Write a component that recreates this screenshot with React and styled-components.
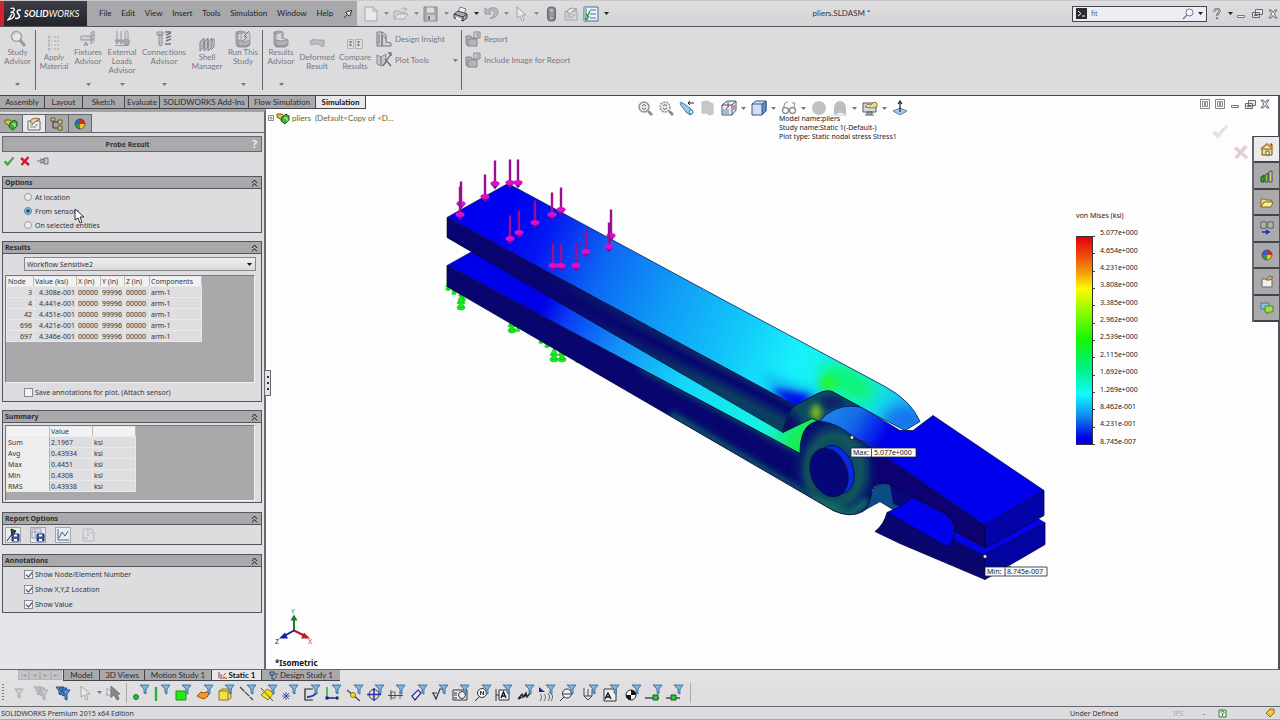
import React, { useState } from 'react'
import styled, { createGlobalStyle, css } from 'styled-components'

const GlobalStyle = createGlobalStyle`
* { box-sizing: border-box; }
body {
margin: 0;
background: #dcdcde;
color: #33343a;
font-family: Lato, "Noto Sans", sans-serif;
font-size: 8px;
line-height: 9px;
}
button, input, select {
font: inherit;
color: inherit;
margin: 0;
padding: 0;
border: 0;
background: none;
}
svg { display: block; flex: none; }
a { color: inherit; text-decoration: none; }
`

const Window = styled.div`
display: flex;
flex-direction: column;
min-height: 100vh;
background: #dcdcde;
`

/* ---------- title bar ---------- */

const TitleBar = styled.header`
display: flex;
align-items: stretch;
height: 27px;
border-top: 1px solid #c9c9cb;
border-bottom: 1px solid #55565c;
background: linear-gradient(#dedee0, #d4d4d7);
`
const Brand = styled.div`
display: flex;
align-items: center;
gap: 2px;
width: 87px;
padding-left: 3px;
border-left: 4px solid #d2232e;
background: linear-gradient(#3c3d46, #23242c);
color: #fff;
font-size: 9px;
font-style: italic;
`
const MenuBar = styled.nav`
display: flex;
align-items: center;
justify-content: space-between;
width: 270px;
padding: 0 4px 0 12px;
background: #a8a8aa;
`
const MenuItem = styled.a`
color: #22232a;
`
const QuickBar = styled.div`
display: flex;
align-items: center;
padding-left: 4px;
`
const IconButton = styled.button`
display: flex;
align-items: center;
justify-content: center;
width: ${p => p.$w || 20}px;
height: 20px;
`
const DocTitle = styled.div`
flex: 1;
align-self: center;
text-align: center;
`
const SearchBox = styled.label`
display: flex;
align-items: center;
align-self: center;
gap: 4px;
width: 135px;
height: 16px;
padding: 0 3px;
border: 1px solid #44454c;
background: #ededf4;
`
const SearchInput = styled.input`
flex: 1;
min-width: 0;
outline: none;
font-size: 7px;
color: #666;
`
const WindowButtons = styled.div`
display: flex;
align-items: center;
`

/* ---------- ribbon ---------- */

const Ribbon = styled.div`
display: flex;
height: 69px;
padding-top: 3px;
border-bottom: 1px solid #44454c;
background: #dcdcde;
`
const RibbonGroup = styled.div`
display: flex;
height: 60px;
padding: 0 1px;
border-right: ${p => (p.$last ? '0' : '1px solid #66676d')};
`
const RibbonButton = styled.button`
display: flex;
flex-direction: column;
align-items: center;
width: ${p => p.$w}px;
height: 60px;
padding-top: ${p => (p.$low ? 5 : 0)}px;
color: #77787e;
text-align: center;
`
const RibbonIcon = styled.span`
display: flex;
align-items: center;
height: 18px;
`
const RibbonDrop = styled.span`
margin-top: auto;
padding-bottom: 4px;
`
const RibbonStack = styled.div`
display: flex;
flex-direction: column;
gap: 3px;
width: ${p => p.$w}px;
padding: 0 2px;
`
const RibbonRow = styled.button`
display: flex;
align-items: center;
gap: 3px;
height: 18px;
color: #77787e;
& > :last-child:not(span) { margin-left: auto; }
`

/* ---------- work area ---------- */

const WorkArea = styled.main`
display: flex;
flex: 1;
min-height: 572px;
`
const SideColumn = styled.div`
position: relative;
display: flex;
flex-direction: column;
flex: none;
width: 266px;
`
const TabStrip = styled.div`
position: relative;
z-index: 2;
display: flex;
width: max-content;
height: 13px;
`
const Tab = styled.button`
width: ${p => p.$w}px;
height: 13px;
border-right: 1px solid #44454c;
border-bottom: 1px solid #44454c;
background: #a9a9ab;
color: #2b2c33;
white-space: nowrap;
${p => p.$active && css`
background: #e8e8ea;
font-weight: 700;
color: #111;
`}
`
const Panel = styled.aside`
display: flex;
flex-direction: column;
flex: 1;
padding: 0 2px;
border-top: 3px solid #a3a3a6;
border-right: 2px solid #6a6b71;
background: linear-gradient(#dcdcdf, #e5e5ea);
font-family: "Noto Sans", sans-serif;
font-size: 7px;
`
const PanelTabs = styled.div`
display: flex;
margin: 2px -2px 3px;
border-bottom: 1px solid #66676d;
`
const PanelTab = styled.button`
display: flex;
align-items: center;
justify-content: center;
width: 23px;
height: 18px;
border: 1px solid #66676d;
border-left: 0;
border-bottom: 0;
background: ${p => (p.$active ? '#e8e8ea' : '#a9a9ab')};
`
const PanelTitle = styled.div`
display: flex;
align-items: center;
height: 16px;
padding-right: 4px;
border: 1px solid #66676d;
background: #aaaaac;
font-weight: 700;
h2 {
flex: 1;
margin: 0;
font-size: 7px;
text-align: center;
}
span { color: #eee; font-size: 10px; }
`
const PanelActions = styled.div`
display: flex;
align-items: center;
height: 18px;
margin-bottom: 6px;
`
const Section = styled.section`
margin-bottom: ${p => (p.$tight ? 8 : 9)}px;
border: 1px solid #55565c;
background: #dddddf;
`
const SectionHead = styled.button`
display: flex;
align-items: center;
justify-content: space-between;
width: 100%;
height: 12px;
padding: 0 3px 0 2px;
border-bottom: 1px solid #55565c;
background: #a9a9ab;
font-weight: 700;
color: #2b2c33;
`
const SectionBody = styled.div`
padding: ${p => p.$pad || '0'};
`
const Choice = styled.label`
display: flex;
align-items: center;
gap: 2px;
height: ${p => p.$h || 14}px;
padding-left: 21px;
`
const Radio = styled.input`
appearance: none;
width: 8px;
height: 8px;
margin-right: 1px;
border: 1px solid #9a9aa0;
border-radius: 50%;
background: #ececee;
&:checked {
border-color: #4a7fa8;
background: radial-gradient(circle, #14507c 0 1px, #c2ddee 3px);
}
`
const Tick = styled.input`
appearance: none;
width: 9px;
height: 9px;
border: 1px solid #8a8b90;
background: #f2f2f4;
&:checked::after {
content: "";
display: block;
width: 3px;
height: 5px;
margin-left: 2px;
border: solid #2c3c66;
border-width: 0 1px 1px 0;
transform: rotate(40deg);
}
`
const SelectWrap = styled.div`
display: flex;
align-items: center;
height: 14px;
margin: 0 3px 4px 21px;
padding-right: 3px;
border: 1px solid #85868b;
background: linear-gradient(#f0f0f1, #d9d9dc);
`
const Select = styled.select`
appearance: none;
flex: 1;
padding-left: 2px;
outline: none;
`
const Well = styled.div`
height: ${p => p.$h}px;
margin: 0 4px 0 2px;
border: 1px solid #77787d;
border-right-color: #f4f4f4;
border-bottom-color: #f4f4f4;
background: #a9a9ab;
`
const Grid = styled.table`
border-collapse: collapse;
table-layout: fixed;
width: ${p => p.$w}px;
background: #dedee0;
line-height: 9px;
th, td {
height: 11px;
padding: 0 1px;
border: 1px solid #e9e9eb;
font-weight: 400;
text-align: left;
white-space: nowrap;
overflow: hidden;
}
thead th {
height: 10px;
border-right-color: #bbb;
background: #f2f2f3;
}
tbody th {
border-right-color: #aaa;
background: #eeeeef;
}
td.num { text-align: right; }
`
const ReportRow = styled.div`
display: flex;
align-items: center;
gap: 9px;
height: 19px;
padding-left: 2px;
`
const ReportButton = styled.button`
display: flex;
align-items: center;
justify-content: center;
width: 16px;
height: 16px;
border: 1px solid ${p => (p.disabled ? 'transparent' : '#a2a6ae')};
background: ${p => (p.disabled ? 'transparent' : '#e9ebf0')};
`

/* ---------- graphics area ---------- */

const Viewport = styled.section`
position: relative;
flex: 1;
min-width: 700px;
border-right: 2px solid #4d515e;
background: #fdfdfe;
`
const Scene = styled.svg`
position: absolute;
inset: 0;
width: 100%;
height: 100%;
font-family: "Noto Sans", sans-serif;
font-size: 7px;
`
const PanelHandle = styled.button`
position: absolute;
left: -1px;
top: 274px;
display: flex;
flex-direction: column;
align-items: center;
justify-content: center;
gap: 4px;
width: 6px;
height: 26px;
border: 1px solid #66676d;
border-left: 0;
background: #e4e4e8;
i {
width: 2px;
height: 2px;
background: #333;
}
`
const HeadsUp = styled.div`
position: absolute;
top: 2px;
left: 0;
right: 0;
display: flex;
justify-content: center;
`
const FeatureTree = styled.div`
position: absolute;
top: 15px;
left: 2px;
display: flex;
align-items: center;
gap: 2px;
color: #66682c;
white-space: pre;
`
const ModelInfo = styled.div`
position: absolute;
left: 513px;
top: 18px;
font-family: "Noto Sans", sans-serif;
font-size: 7px;
color: #222;
p { margin: 0; }
`
const DocButtons = styled.div`
position: absolute;
top: 3px;
right: 6px;
display: flex;
gap: 3px;
`
const Confirm = styled.button`
position: absolute;
right: ${p => p.$right}px;
top: ${p => p.$top}px;
`
const Legend = styled.div`
position: absolute;
right: 136px;
top: 115px;
width: 66px;
font-family: "Noto Sans", sans-serif;
font-size: 7px;
color: #222;
`
const LegendScale = styled.div`
display: flex;
margin-top: 4px;
ol {
display: grid;
grid-template-rows: repeat(13, 1fr);
align-items: center;
height: 226px;
margin: 0;
padding: 0 0 0 5px;
list-style: none;
}
`
const LegendBar = styled.div`
width: 17px;
height: 209px;
margin-top: 12px;
border: 1px solid #333;
border-width: 1px 1px 1px 0;
background: linear-gradient(#e00010, #f04a08 9%, #f59a08 17%, #fffb00 25%, #8dfb00 36%, #14f50a 50%, #00f078 62%, #10fbfb 76%, #1090f0 86%, #0000e8 97%);
`
const Ticks = styled.div`
width: 2px;
height: 209px;
margin-top: 12px;
border-bottom: 1px solid #444;
background: repeating-linear-gradient(#444 0 1px, transparent 1px calc(100% / 12));
`
const TaskPane = styled.div`
position: absolute;
top: 40px;
right: -1px;
display: grid;
grid-template-rows: repeat(7, 1fr);
width: 27px;
height: 186px;
border-top: 1px solid #44454c;
border-left: 2px solid #66676d;
`
const TaskTab = styled.button`
display: flex;
align-items: center;
justify-content: center;
border-bottom: 2px solid #44454c;
background: ${p => (p.$active ? '#ebebed' : '#aaaaac')};
`
const ViewName = styled.div`
position: absolute;
left: 9px;
bottom: 2px;
font-family: "Noto Sans", sans-serif;
font-size: 8px;
font-weight: 700;
color: #111;
`

/* ---------- bottom ---------- */

const SheetTabs = styled.div`
display: flex;
height: 12px;
padding-left: 18px;
border-top: 1px solid #66676d;
background: #e3e3e6;
`
const SheetNav = styled.div`
display: flex;
width: 45px;
button {
width: 11px;
height: 10px;
border: 1px solid #b4b4b8;
background: #c5c5c8;
color: #999;
font-size: 6px;
line-height: 6px;
}
`
const SheetTab = styled(Tab)`
display: flex;
align-items: center;
justify-content: center;
gap: 2px;
height: 11px;
border-left: 1px solid #44454c;
border-right: 0;
`
const FilterBar = styled.div`
display: flex;
align-items: center;
height: 26px;
padding-bottom: 2px;
border-bottom: 1px solid #66676d;
background: #dfdfe1;
`
const Grip = styled.span`
width: 2px;
height: 18px;
margin: 0 4px 0 2px;
background: repeating-linear-gradient(#777 0 1px, transparent 1px 3px);
`
const Divider = styled.span`
width: 1px;
height: 20px;
background: #aaa;
`
const FilterGrid = styled.div`
display: grid;
grid-template-columns: repeat(26, 1fr);
width: 556px;
margin: 0 4px 0 3px;
button {
display: flex;
justify-content: center;
}
`
const StatusBar = styled.footer`
display: flex;
align-items: center;
height: 13px;
padding: 0 5px 0 1px;
border-bottom: 1px solid #aaa;
background: #dcdcde;
font-family: "Noto Sans", sans-serif;
font-size: 7px;
`
const StatusCell = styled.span`
width: ${p => p.$w}px;
color: ${p => (p.$dim ? '#aaa' : 'inherit')};
`
const Spacer = styled.span`
flex: 1;
`

/* ---------- icons ---------- */

const Svg = ({ s = 16, w, h, children }) => (
    <svg width={w || s} height={h || s} viewBox={`0 0 ${w || s} ${h || s}`} fill="none" aria-hidden="true">
        {children}
    </svg>
)

const Caret = ({ color = '#77787e' }) => (
    <Svg w={5} h={3}><path d="M0 0h5L2.5 3z" fill={color} /></Svg>
)

const Chevrons = () => (
    <Svg w={7} h={8}><path d="M1 4l2.500-3L6 4M1 7.500l2.500-3 2.500 3" stroke="#222" /></Svg>
)

const DsLogo = () => (
    <Svg w={15} h={14}>
        <path d="M3.500 1.500C6 .5 8 1.500 7 3.500 6.300 5 5 5.300 3.500 5.500c3-.3 4.500 1 3.500 3.500-.8 2-3 3-6 4 1.500-2 3-4.500 4-6" stroke="#fff" strokeWidth="1.300" />
        <path d="M14 3.200c-2.500-.8-4.500.6-3.500 2.600.8 1.600 2.400 2.200 2 3.900-.3 1.500-2 1.900-4.500 1.600" stroke="#fff" strokeWidth="1.500" />
    </Svg>
)

const Pin = () => (
    <Svg s={10}><path d="M1 9l3-3" stroke="#333" /><path d="M3 4l3 3c2 0 2-2 1.500-3L9 2 8 1 6 2.500C5 2 3 2 3 4z" stroke="#333" fill="#ddd" /></Svg>
)

const PageIcon = () => (
    <Svg><path d="M2 1h8l4 4v10H2z" fill="#eaeaec" stroke="#a5a5aa" /><path d="M10 1v4h4" stroke="#a5a5aa" /></Svg>
)
const OpenIcon = () => (
    <Svg><path d="M1 13V5h5l1 1h5v2H5z" fill="#d3d3d6" stroke="#aaaab0" /><path d="M1 13l4-5h10l-4 5z" fill="#e5e5e8" stroke="#aaaab0" /><path d="M8 3c2-2 4-1 5 1l1-2M13 4l-2-1" stroke="#aaaab0" /></Svg>
)
const SaveIcon = () => (
    <Svg><path d="M1 1h13v14H1z" fill="#a8a8ad" stroke="#88888d" /><path d="M4 1.500h7v5H4z" fill="#dededf" /><path d="M4 9h8v5.500H4z" fill="#c9c9cc" /><path d="M5 10h2v4H5z" fill="#77777c" /></Svg>
)
const PrintIcon = () => (
    <Svg><path d="M5 6l2-5 6 2-2 5z" fill="#f4f4f8" stroke="#77787e" /><path d="M1 8l4-3 9 3v4l-4 3-9-3z" fill="#aab" stroke="#44454c" /><path d="M1 8l9 3 4-3M10 11v4" stroke="#33343a" /><path d="M3 11l5 2v2l-5-2z" fill="#fff" /></Svg>
)
const UndoIcon = () => (
    <Svg><path d="M2 2v6h6L6 6c3-3 7-1 5 3-.6 1.400-2 2.500-4 3.500 5-.5 8-3 8-6.500C15 1.500 9 0 4.500 4z" fill="#bdbdc1" stroke="#94949a" /></Svg>
)
const CursorIcon = ({ fill = '#e8e8ea', stroke = '#a5a5aa' }) => (
    <Svg><path d="M4 1v11l3-2 2 5 2-1-2-5h4z" fill={fill} stroke={stroke} /></Svg>
)
const SelectOtherIcon = () => (
    <Svg><path d="M1 3v8l2-2 2 4 1-1-1-3h2z" fill="#e8e8ea" stroke="#a5a5aa" /><path d="M5 1v11l3-2 3 5 2-1-2-5h3z" fill="#85858a" stroke="#77777c" /></Svg>
)
const TrafficIcon = () => (
    <Svg><rect x="4.500" y="1" width="8" height="14" rx="3" fill="#85868b" stroke="#66676c" /><circle cx="8.500" cy="4.500" r="2" fill="#b5b5b8" /><circle cx="8.500" cy="8.500" r="2" fill="#9b9b9f" /><circle cx="8.500" cy="12" r="1.500" fill="#b5b5b8" /></Svg>
)
const HandListIcon = ({ soft = true }) => (
    <Svg><path d="M2 5h12v9H2z" fill={soft ? '#d5d5d8' : '#eee'} stroke={soft ? '#a5a5aa' : '#66676c'} /><path d="M4 6l2-3 4-1 4 1-4 2-3 3z" fill={soft ? '#e5e5e8' : '#e9cf9c'} stroke={soft ? '#99999e' : '#8a6a3a'} /><path d="M4 9h3M4 11h6M9 9h3" stroke={soft ? '#a5a5aa' : '#88898e'} /></Svg>
)
const OptionsIcon = () => (
    <Svg><path d="M1 1h14v14H1z" fill="#eef1f7" stroke="#4f6a8c" /><path d="M1 1h3v14H1z" fill="#9db7d3" /><path d="M7 4h6M7 8h6M7 12h6" stroke="#9fb0cb" strokeWidth="2" /><path d="M3 8l1.500 2L7 5M2 12l1.500 2L6 10" stroke="#259a3a" strokeWidth="1.300" /></Svg>
)

const HelpIcon = () => (
    <Svg w={10} h={12}><path d="M2.500 4c-.5-4 5.500-4 5-.5C7.300 5.500 5 5.500 5 8M5 9.500V11" stroke="#66676d" strokeWidth="2.200" /><path d="M2.500 4c-.5-4 5.500-4 5-.5C7.300 5.500 5 5.500 5 8" stroke="#e6e6e8" strokeWidth=".8" /></Svg>
)
const MinIcon = () => <Svg s={10}><path d="M1.500 6.500h7v2h-7z" stroke="#77787e" fill="#f4f4f6" /></Svg>
const RestoreIcon = () => (
    <Svg s={11}><path d="M3.500 1.500h7v5h-7zM.5 4.500h7v5h-7z" stroke="#66676d" fill="#e9e9ec" /><path d="M2.500 6.500h3v1h-3z" stroke="#66676d" /></Svg>
)
const CloseIcon = () => (
    <Svg s={10}><path d="M1 1h2l2 2.500L7 1h2L6.200 5 9 9H7L5 6.500 3 9H1l2.800-4z" stroke="#66676d" fill="#f2f2f4" /></Svg>
)
const TileIcon = () => (
    <Svg s={10}><path d="M.5.5h9v9h-9z" stroke="#88898e" /><path d="M2.500 2.500h2v5h-2zM5.500 2.500h2v5h-2z" stroke="#88898e" /></Svg>
)

const StudyIcon = () => (
    <Svg s={18}><circle cx="7.500" cy="6.500" r="5" fill="#e8e8ea" stroke="#a0a0a5" strokeWidth="1.600" /><path d="M11 10l5 6" stroke="#9a9a9f" strokeWidth="3" /><path d="M5 6c0-2 2-3 3.500-2.500" stroke="#bbb" /></Svg>
)
const MaterialIcon = () => (
    <Svg s={18}><path d="M4 1v16M3 2h4M3 6h4M3 10h4M3 14h4M9 2h6M9 6h6M9 10h6M9 14h6" stroke="#a5a5aa" strokeDasharray="2 1" /></Svg>
)
const FixtureIcon = () => (
    <Svg s={18}><path d="M2 6h10v4H2zM12 3v11l3-3V1z" fill="#d0d0d3" stroke="#99999e" /><path d="M7 12l-2 3h4z" stroke="#88888d" /><path d="M12 7l3-3M12 11l3-3" stroke="#88888d" /></Svg>
)
const LoadsIcon = () => (
    <Svg s={18}><path d="M4 1v12M8 1v12M2 10l2 4 2-4zM6 10l2 4 2-4zM2 15.500h14" stroke="#99999e" fill="#bbb" /><rect x="12" y="1" width="3" height="10" rx="1.500" fill="#d5d5d8" stroke="#a5a5aa" /><circle cx="13.500" cy="12" r="3" fill="#aaaaae" stroke="#99999e" /></Svg>
)
const ConnectIcon = () => (
    <Svg s={18}><path d="M2 2h6v3H2zM4 5h3v10l-1.500 1L4 15z" fill="#c5c5c8" stroke="#8f8f94" /><path d="M10 2h6M11 5l5-2M11 8l5-2M11 11l5-2M10 14h6" stroke="#77777c" strokeWidth="1.500" /></Svg>
)
const ShellIcon = () => (
    <Svg s={18}><path d="M2 7l4-4v9l-4 4zM6 7l4-4v9l-4 4zM10 7l4-4v9l-4 4z" fill="#bcbcc0" stroke="#808085" /><path d="M14 6l2-2v8l-3 3" stroke="#808085" /></Svg>
)
const PartShape = ({ children }) => (
    <Svg s={18}>
        <path d="M2 2l5-1 4 1v6l5 2v5l-3 2H4l-2-3z" fill="#b2b2b6" stroke="#95959a" />
        <path d="M4 4l6-2v6l6 2-6 1-6-1z" fill="#d5d5d8" stroke="#95959a" />
        <path d="M4 10v6h8l4-2M4 4L2 2" stroke="#85858a" />
        {children}
    </Svg>
)
const RunIcon = () => (
    <PartShape><path d="M7 3h9v7l-6 2-3-2z" fill="#d0d0d3" stroke="#a0a0a5" /><path d="M15 1l-5 5 3 1-5 5" stroke="#77777c" /></PartShape>
)
const DeformedIcon = () => (
    <Svg s={18}><path d="M2 6c3-3 9 0 14-1v6c-2 1-3 0-4-1-3-2-7-1-9 0z" fill="#bdbdc1" stroke="#a0a0a5" /></Svg>
)
const CompareIcon = () => (
    <Svg s={18}><path d="M1.500 4.500h6v9h-6zM9.500 4.500h7v9h-7z" stroke="#b2b2b6" /><path d="M4.500 6v6M12.500 6v6" stroke="#77777c" strokeWidth="2" strokeDasharray="2 1" /></Svg>
)
const InsightIcon = () => (
    <Svg><path d="M1 1h5v14H1zM6 4l4 3v4l5 1v3H6z" fill="#d0d0d3" stroke="#77777c" /><path d="M6 1l4 3v4M3 3v10" stroke="#77777c" /></Svg>
)
const PlotIcon = () => (
    <Svg><path d="M1 3l4 2v9l-4-2zM5 5l5-3v9l-5 3z" fill="#c9c9cc" stroke="#88888d" /><path d="M7 14l8-12M9 7l6 7M12 1h3v3" stroke="#6d6d72" strokeWidth="1.300" /></Svg>
)
const ReportIcon = () => (
    <Svg><path d="M1 5h5l1 2h5v8H3l-2-2z" fill="#b5b5b9" stroke="#85858a" /><path d="M3 8h8M3 8v7" stroke="#85858a" /><path d="M9 1h6v6H9z" fill="#dcdcde" stroke="#85858a" /><path d="M11 3h3M11 5h3" stroke="#85858a" /></Svg>
)

const FmIcon = () => (
    <Svg s={14}><path d="M1 3h5l2 2v4L4 8 1 6z" fill="#e0c43c" stroke="#6e5a10" /><path d="M6 6l4-3 3 2v4l-4 4-4-3z" fill="#3fb13a" stroke="#14601c" /><path d="M8 7h3v3" stroke="#e6f6b0" /></Svg>
)
const ConfigIcon = () => (
    <Svg s={14}><path d="M3 2v9h5M3 5h5" stroke="#333" /><path d="M1 1h4v3H1z" fill="#e6cb3b" stroke="#655" /><path d="M8 3h4v4H8zM8 9h4v4H8z" fill="#d8c85c" stroke="#655" /></Svg>
)
const BallIcon = () => (
    <Svg s={14}><path d="M7 7V2a5 5 0 0 1 5 5z" fill="#d52b2b" /><path d="M7 7H2a5 5 0 0 1 5-5z" fill="#2f63c9" /><path d="M7 7h5a5 5 0 0 1-5 5z" fill="#f0c22a" /><path d="M7 7v5a5 5 0 0 1-5-5z" fill="#2f9a3c" /><circle cx="7" cy="7" r="5" stroke="#333" strokeWidth=".6" /></Svg>
)
const CheckIcon = ({ color = '#3da83b', s = 12 }) => (
    <svg width={s} height={s} viewBox="0 0 12 12"><path d="M1 7l2-1 1.500 2L10 2l1 1-6.500 8z" fill={color} stroke={color} strokeWidth=".6" /></svg>
)
const CrossIcon = ({ color = '#cf1f2e', s = 12 }) => (
    <svg width={s} height={s} viewBox="0 0 12 12"><path d="M2 3l8 7M9.500 2L2.500 10" stroke={color} strokeWidth="2.400" /></svg>
)
const PushPin = () => (
    <Svg w={14} h={10}><path d="M1 5h4M5 2v6M5 3.500h3v3H5M8 2h4v6H8z" stroke="#77777c" fill="#c5c5c8" /></Svg>
)

const FloppyOver = ({ children }) => (
    <Svg s={14}>{children}<path d="M6 6h7v7H6z" fill="#3b5799" stroke="#1f3468" /><path d="M8 6.500h3v2H8zM8 11h3v2H8z" fill="#fff" /></Svg>
)

const Zoom = ({ dashed }) => (
    <Svg><circle cx="7" cy="7" r="5" fill="#e6e8ea" stroke="#909398" strokeWidth="1.400" strokeDasharray={dashed ? '2 1' : null} /><path d="M5 6l2-1.500L9 6M5 8l2 1.500L9 8" stroke="#667" /><path d="M11 11l4 4" stroke="#88898f" strokeWidth="2.500" /></Svg>
)
const PrevView = () => (
    <Svg><path d="M2 2l9 6 3 5-3 2-4-3-6-8z" fill="#9ecbe8" stroke="#3e7aa5" /><path d="M15 3H9l2-2M9 3l2 2" stroke="#222" /><circle cx="12" cy="12" r="2" fill="#e1f1fa" stroke="#3e7aa5" /></Svg>
)
const SectionView = () => (
    <Svg><path d="M2 2l5-1 6 3v10l-4 1-2-2-5 0z" fill="#c5c7c9" stroke="#bcbec1" /></Svg>
)
const OrientView = () => (
    <Svg><path d="M1 5l5-4h9v9l-4 5H1z" fill="#e4eef8" stroke="#445a70" /><path d="M1 5h10v10M11 5l4-4" stroke="#445a70" /><path d="M7 2v5M13 5v5M5 9l3-3" stroke="#b8324a" /><path d="M2 9h6v5H2z" fill="#94bfe2" /></Svg>
)
const CubeView = () => (
    <Svg><path d="M1 4l4-3h10v10l-4 4H1z" fill="#cfe0f6" stroke="#3d567c" /><path d="M11 4v11l4-4V1z" fill="#5e8ed0" stroke="#3d567c" /><path d="M1 4h10" stroke="#3d567c" /></Svg>
)
const GlassesView = () => (
    <Svg><circle cx="4.500" cy="10.500" r="3" stroke="#8d9196" strokeWidth="1.400" /><circle cx="11.500" cy="10.500" r="3" stroke="#8d9196" strokeWidth="1.400" /><path d="M2 9l2-6 3-1M13 8l1-5-3 0" stroke="#8d9196" /></Svg>
)
const SphereView = () => <Svg><circle cx="8" cy="8" r="7" fill="#bfc1c3" /></Svg>
const SceneView = () => <Svg><path d="M2 15V8a6 7 0 0 1 12 0v7l-4-2H7z" fill="#bcbec0" /><path d="M1 15h14" stroke="#ccc" /></Svg>
const MonitorView = () => (
    <Svg><path d="M1 3h13v9H1z" fill="#d5d9de" stroke="#55585e" /><path d="M3 7l3-3 3 1 3-3 3 1v4l-5 1z" fill="#eedc94" stroke="#7a6a2c" strokeWidth=".8" /><path d="M5 12h5v2H5zM3 15h9" stroke="#55585e" /></Svg>
)
const NormalTo = () => (
    <Svg><path d="M8 8l7 3-7 4-7-4z" fill="#a9c9e8" stroke="#5b83ac" /><path d="M8 12V1M6 4l2-3 2 3" stroke="#2b3038" strokeWidth="1.300" /></Svg>
)

const TASKS = [
    <Svg key="h" s={14}><path d="M2 7h10v6H2z" fill="#f2e08a" stroke="#6d5a1a" /><path d="M1 7l6-5 6 5" stroke="#b8902a" strokeWidth="2" /><path d="M6 9h3v4H6z" fill="#fff" stroke="#6d5a1a" /><path d="M10 2h2v3" fill="#b33" stroke="#b33" /></Svg>,
    <Svg key="l" s={14}><path d="M1 8l3-2v7H1z" fill="#3ba33d" stroke="#185d1e" /><path d="M5 6l3-2v9H5z" fill="#7fcf3c" stroke="#185d1e" /><path d="M9 3l3-1v11H9z" fill="#e9d65a" stroke="#2b4a8d" /></Svg>,
    <Svg key="f" s={14}><path d="M1 12V4h4l1 1h5v2" fill="#f0dc84" stroke="#80691d" /><path d="M1 12L4 7h9l-2 5z" fill="#f9eda8" stroke="#80691d" /></Svg>,
    <Svg key="v" s={14}><path d="M1 1h5v6H1zM8 1h5v6H8z" fill="#efeff1" stroke="#44454c" /><path d="M2 3h3M2 5h3M9 3h3M9 5h3" stroke="#5a8a3a" /><path d="M2 11h6M6 9l3 2-3 2" stroke="#1c2fb0" strokeWidth="1.500" /></Svg>,
    <BallIcon key="b" />,
    <Svg key="p" s={14}><path d="M2 5h10v8H2z" fill="#efefef" stroke="#66676d" /><path d="M6 6l3-4 4 1-3 3z" fill="#d9b678" stroke="#7b5f33" /></Svg>,
    <Svg key="c" s={14}><path d="M1 2h8v6H1z" fill="#8fc3ea" stroke="#3c78ac" /><path d="M5 5h8v6H9l-2 2v-2H5z" fill="#9be04a" stroke="#4c8c1e" /></Svg>,
]

/* small glyphs that sit under the selection-filter funnel */
const FILTERS = [
    <circle cx="4" cy="13" r="2.500" fill="#28c038" stroke="#127a20" />,
    <path d="M3 3v14" stroke="#2fae3c" strokeWidth="2.400" />,
    <path d="M2 7h10v9H2z" fill="#28e818" stroke="#159418" />,
    <path d="M1 12l4-4 3 1 5-2-1 5-4 3-3-1z" fill="#f09a2a" stroke="#9c4c10" />,
    <path d="M2 7l3-2h9v9l-3 2H2zM2 7h9v9" fill="#f5df4c" stroke="#8f7a14" />,
    <path d="M1 3l13 13" stroke="#2a4a3a" strokeDasharray="6 1" strokeWidth="1.200" />,
    <><path d="M1 11l6-6 7 4-6 7z" fill="#f2e02c" stroke="#8f7a14" /><path d="M1 4l12 13" stroke="#55561c" /></>,
    <path d="M5 8v8M1 12h8M2 9l6 6M8 9l-6 6" stroke="#4a4cb0" />,
    <><path d="M10 5H2v11h8" stroke="#222" strokeWidth="1.200" /><path d="M4 13c5 0 8-2 10-5" stroke="#2038c0" strokeWidth="2" /></>,
    <><path d="M3 3v11" stroke="#28a838" strokeWidth="1.500" /><path d="M3 14h11" stroke="#1c2090" strokeWidth="1.500" /><path d="M1.500 12.500h3v3h-3zM12 12.500h2.500v3H12z" fill="#1c2060" /></>,
    <><path d="M1 6l13 11" stroke="#44454c" strokeWidth="1.300" /><circle cx="7" cy="11" r="2.500" fill="#f2d92c" stroke="#8f7a14" /></>,
    <><circle cx="7" cy="10.500" r="5" stroke="#33343a" /><path d="M0 10.500h14M7 4v13" stroke="#2c2cb0" strokeWidth="1.500" /></>,
    <><path d="M3 6v10M12 8v7M3 8h4v6H3z" stroke="#66676d" /><path d="M0 11.500h15" stroke="#3a3aa8" /></>,
    <path d="M2 12l6-6 3 3-6 7zM2 12l3 4" stroke="#2a2a9c" strokeWidth="1.200" fill="#e8e8f4" />,
    <path d="M1 9h5M2 9l3 6 4-10h5" stroke="#33343a" strokeWidth="1.200" />,
    <><path d="M1 6h14v10H1z" fill="#f0f0f2" stroke="#33343a" /><circle cx="10" cy="11" r="3.500" stroke="#33343a" /><path d="M2 9h3M2 11h3M2 14h3" stroke="#33343a" /></>,
    <><circle cx="8" cy="9" r="4.500" fill="#f0f0f2" stroke="#33343a" /><path d="M5 13l-4 4M6.500 11V7l3 4V7" stroke="#33343a" /></>,
    <><path d="M1 5v12M1 11h3M4 6h10v10H4z" fill="#f0f0f2" stroke="#33343a" /><path d="M6 14l2.500-6 2.500 6M7 12h3" stroke="#111" strokeWidth="1.300" /></>,
    <path d="M1 15l4-5 1 3 3-4 1 4 4-5M2 15l3-2M7 13l2-2" stroke="#22232a" strokeWidth="1.300" />,
    <><path d="M1 3v5h6z" fill="#2a2a8c" /><path d="M2 10c2 2 2 4 0 7M6 10c2 2 2 4 0 7M10 9c2 3 2 5 0 8M13 9c2 3 2 5 0 8" stroke="#66676d" /></>,
    <><circle cx="8" cy="9.500" r="4.500" fill="#f0f0f2" stroke="#33343a" /><path d="M3 10h10M5 13l-4 4" stroke="#33343a" /></>,
    <path d="M3 4v8l4 4 4-4V5M3 12h8M7 5v7" stroke="#44454c" fill="#e8e8ea" />,
    <><path d="M2 5h12v12H2z" fill="#f0f0f2" stroke="#33343a" /><path d="M3 15l3-6 3 6M4 13h4" stroke="#111" strokeWidth="1.300" /></>,
    <><circle cx="7" cy="11" r="5" fill="#fff" stroke="#222" /><path d="M7 11V6a5 5 0 0 1 5 5zM7 11v5a5 5 0 0 1-5-5z" fill="#111" /></>,
    <><path d="M0 14h14" stroke="#33343a" strokeWidth="1.300" /><path d="M8 11h5v5H8z" fill="#2cc83a" stroke="#135c1c" /></>,
    <><path d="M0 14h14" stroke="#33343a" strokeWidth="1.300" /><path d="M5 11h5v5H5z" fill="#2cc83a" stroke="#135c1c" /></>,
]

const FilterIcon = ({ children }) => (
    <Svg w={18} h={18}>
        {children}
        <path d="M8 1h9l-3 4v5l-2-1V5z" fill="#7fb6e4" stroke="#2e5f8f" strokeWidth=".8" />
    </Svg>
)
const Funnel = ({ n = 1, fill, stroke }) => (
    <Svg>
        {n > 1 && <path d="M1 2h8L6 6v4L4 9V6zM4 3h8L9 7v4L7 10V7z" fill={fill} stroke={stroke} />}
        <path d={n > 1 ? 'M7 5h8l-3 4v6l-2-1V9z' : 'M4 4h8L9 8v5l-2-1V8z'} fill={fill} stroke={stroke} />
    </Svg>
)

/* ---------- stress plot ---------- */

const LOADS = [
    [461, 209, 28], [460, 220, 34], [485, 202, 28], [495, 189, 29], [510, 188, 29], [518, 188, 29],
    [552, 220, 28], [561, 215, 28], [535, 228, 28], [519, 238, 28], [510, 244, 29], [553, 271, 28],
    [561, 271, 28], [576, 271, 29], [586, 257, 28], [611, 241, 32], [609, 252, 30],
]
const FIXTURES = [[448, 284, 0.6], [454, 288, 0.6], [462, 292, 0.9], [461, 299, 1], [512, 322, 1], [518, 326, 0.5], [541, 337, 0.6], [547, 341, 0.6], [554, 351, 1], [562, 351, 1], [577, 358, 0.4]]

const Arm = {
    upperTop: 'M447 217L508 183L730 303L885 386Q911 400 920 421L905 430L857 405L832 391Q825 389 816 394L795 405Z',
    upperSide: 'M447 217L795 405Q786 414 783 432L447 237Z',
    lowerTop: 'M447 265L472 251L790 425L818 410L820 424L804 455Z',
    joint: 'M447 265L800 453Q800 425 816 421Q825 419 840 426L867 442L913 475L985 525V548L955 531Q953 519 945 513L913 497L890 484Q877 480 872 490Q870 505 863 511Q850 518 833 510L447 286Z',
    fork: 'M783 432Q786 414 795 405L816 394Q825 389 832 391L860 406L840 412L822 422L812 418Z',
    jawTop: 'M820 421L826 414Q843 402 862 407L900 430H913L933 415L1044 490L985 525L913 475L852 435Q834 421 820 421Z',
}

const StressPlot = () => (
    <Scene viewBox="266 96 1012 572" preserveAspectRatio="xMidYMid meet" role="img" aria-label="Stress plot of pliers">
        <defs>
            <linearGradient id="top" gradientUnits="userSpaceOnUse" x1="500" y1="230" x2="900" y2="400">
                <stop offset="0" stopColor="#0000f0" />
                <stop offset=".1" stopColor="#0418f2" />
                <stop offset=".25" stopColor="#0c68f4" />
                <stop offset=".42" stopColor="#109cf6" />
                <stop offset=".6" stopColor="#12c8fa" />
                <stop offset=".74" stopColor="#18f0fa" />
                <stop offset=".9" stopColor="#14f4e0" />
                <stop offset="1" stopColor="#18c8f0" />
            </linearGradient>
            <linearGradient id="low" gradientUnits="userSpaceOnUse" x1="540" y1="310" x2="800" y2="450">
                <stop offset="0" stopColor="#0000e8" />
                <stop offset=".1" stopColor="#0a40f4" />
                <stop offset=".3" stopColor="#1494f6" />
                <stop offset=".55" stopColor="#14d8fa" />
                <stop offset=".85" stopColor="#14f4e0" />
                <stop offset="1" stopColor="#18e860" />
            </linearGradient>
            <linearGradient id="side" gradientUnits="userSpaceOnUse" x1="640" y1="321" x2="629" y2="343">
                <stop offset="0" stopColor="#0a3d62" />
                <stop offset=".5" stopColor="#060470" />
                <stop offset="1" stopColor="#0a3d62" />
            </linearGradient>
            <linearGradient id="fade" gradientUnits="userSpaceOnUse" x1="540" y1="0" x2="720" y2="0">
                <stop offset="0" stopColor="#0a0470" />
                <stop offset="1" stopColor="#0a0470" stopOpacity="0" />
            </linearGradient>
            <linearGradient id="jaw" gradientUnits="userSpaceOnUse" x1="835" y1="408" x2="885" y2="438">
                <stop offset="0" stopColor="#1c80e8" />
                <stop offset=".4" stopColor="#1468e8" />
                <stop offset="1" stopColor="#0000ec" />
            </linearGradient>
            <filter id="b3" filterUnits="userSpaceOnUse" x="420" y="160" width="660" height="440"><feGaussianBlur stdDeviation="3" /></filter>
            <filter id="b8" filterUnits="userSpaceOnUse" x="420" y="160" width="660" height="440"><feGaussianBlur stdDeviation="7" /></filter>
            {Object.keys(Arm).map(k => <clipPath key={k} id={`c-${k}`}><path d={Arm[k]} /></clipPath>)}
        </defs>

        {FIXTURES.map(([x, y, k], i) => (
            <g key={i} transform={`translate(${x} ${y}) scale(${k})`} fill="#18f01c" stroke="#0ca81c" strokeWidth=".5">
                <path d="M0-4L4 4H-4z" />
                <ellipse cx="0" cy="8" rx="4" ry="2.500" />
                <path d="M-2 3h4v5h-4z" />
            </g>
        ))}

        {/* lower arm inner face, seen through the gap */}
        <path d={Arm.lowerTop} fill="url(#low)" stroke="#0a1a50" strokeWidth=".6" />
        <g clipPath="url(#c-lowerTop)">
            <ellipse cx="802" cy="440" rx="16" ry="14" fill="#18ee50" filter="url(#b8)" />
        </g>

        {/* upper arm */}
        <path d={Arm.upperTop} fill="url(#top)" />
        <g clipPath="url(#c-upperTop)">
            <ellipse cx="848" cy="382" rx="30" ry="14" transform="rotate(28 848 382)" fill="#10f474" filter="url(#b8)" />
            <ellipse cx="828" cy="383" rx="9" ry="8" fill="#20f838" filter="url(#b3)" />
            <path d="M760 374L800 390L822 393L795 412Z" fill="#1080f0" filter="url(#b8)" />
            <path d="M772 388L812 395L795 412Z" fill="#0010e8" filter="url(#b3)" />
            <ellipse cx="905" cy="420" rx="22" ry="16" fill="#1474ee" filter="url(#b8)" />
        </g>
        <path d={Arm.upperTop} stroke="#0a1a50" strokeWidth=".8" fill="none" />
        <path d={Arm.upperSide} fill="url(#side)" />
        <path d={Arm.upperSide} fill="url(#fade)" stroke="#06063c" strokeWidth=".6" />
        <path d={Arm.fork} fill="#0c4a62" />
        <g clipPath="url(#c-fork)">
            <ellipse cx="790" cy="424" rx="9" ry="12" fill="#070a66" filter="url(#b3)" />
            <ellipse cx="832" cy="402" rx="11" ry="4" fill="#080d70" filter="url(#b3)" />
            <ellipse cx="816" cy="412" rx="5" ry="8" fill="#86c41c" filter="url(#b3)" />
        </g>
        <path d={Arm.fork} fill="none" stroke="#041428" strokeWidth=".8" />

        {/* lower jaw */}
        <path d="M872 492Q876 482 888 482L915 497L901 507L893 509L880 501L862 511Z" fill="#0c4c84" stroke="#041438" strokeWidth=".8" />
        <path d="M890 484L930 500L901 507L893 503Z" fill="#08087c" />
        <path d="M945 525L962 533V548H945Z" fill="#08087c" />
        <path d="M887 512L900 506L913 497L946 513Q953 520 955 533L950 546H945Z" fill="#0000ec" stroke="#04045c" strokeWidth=".8" />
        <path d="M887 512L945 545L950 546L955 538L985 554V579L900 543L875 531Q884 524 887 512Z" fill="#09066e" stroke="#04043c" strokeWidth=".8" />
        <path d="M955 531L985 548L1037 517L1045 522L985 555L955 540Z" fill="#0404ec" />
        <path d="M985 554L1045 522V544L985 579Z" fill="#0404a4" stroke="#04043c" strokeWidth=".8" />

        {/* joint and upper jaw */}
        <path d={Arm.joint} fill="#08066e" />
        <g clipPath="url(#c-joint)">
            <path d="M640 366L800 451" stroke="#0c5068" strokeWidth="7" filter="url(#b3)" />
            <path d="M670 414L835 512" stroke="#0c5868" strokeWidth="8" filter="url(#b3)" />
            <ellipse cx="836" cy="468" rx="34" ry="44" fill="#0e4c66" filter="url(#b8)" />
            <ellipse cx="834" cy="470" rx="27" ry="34" fill="none" stroke="#126450" strokeWidth="4" filter="url(#b3)" />
            <path d="M810 500L850 514L868 500" fill="none" stroke="#127064" strokeWidth="8" filter="url(#b3)" />
            <path d="M872 446L1000 540L960 560L875 482Z" fill="#090570" filter="url(#b3)" />
        </g>
        <path d={Arm.joint} fill="none" stroke="#04063c" strokeWidth=".8" />
        <path d={Arm.jawTop} fill="url(#jaw)" stroke="#04104c" strokeWidth=".8" />
        <path d="M985 525L1044 490V515L985 548Z" fill="#0404a8" stroke="#04043c" strokeWidth=".8" />

        {/* pin */}
        <ellipse cx="836" cy="469" rx="17" ry="25" transform="rotate(-20 836 469)" fill="#0a28e0" stroke="#04103c" strokeWidth=".8" />
        <ellipse cx="829" cy="472" rx="18" ry="25" transform="rotate(-22 829 472)" fill="#060678" stroke="#04103c" strokeWidth=".8" />

        {LOADS.map(([x, y, l], i) => (
            <g key={i}>
                <path d={`M${x} ${y - l}V${y - 6}`} stroke="#9a1090" strokeWidth="2.400" />
                <path d={`M${x - 4.500} ${y - 6}h9L${x} ${y}z`} fill="#8c0888" />
                <ellipse cx={x} cy={y - 6} rx="4.500" ry="2.500" fill="#d810cc" />
            </g>
        ))}

        <g stroke="#222" strokeWidth=".8">
            <path d="M852 437L885 448M985 556L1012 567" />
            <circle cx="852" cy="437" r="1.800" fill="#fff" />
            <circle cx="985" cy="556" r="1.800" fill="#fff" />
            <path d="M851 447.500h65v9h-65zM985 566.500h62v9h-62z" fill="#fafafa" />
            <path d="M871.500 448v8.500M1005 567v8.500" />
        </g>
        <g fill="#222">
            <text x="853" y="454">Max:</text>
            <text x="874" y="454">5.077e+000</text>
            <text x="987" y="573">Min:</text>
            <text x="1007" y="573">8.745e-007</text>
        </g>

        {/* triad */}
        <g strokeWidth="2">
            <path d="M294 630V619" stroke="#1c7a28" /><path d="M290.500 620l3.500-6 3.500 6z" fill="#1c7a28" />
            <path d="M294 630l10 5" stroke="#a81c24" /><path d="M304 632l6 6-9 0z" fill="#c01c28" />
            <path d="M294 630l-9 5" stroke="#1c1c90" /><path d="M285 632l-6 6 9 0z" fill="#1c1cb0" />
        </g>
        <text x="291" y="613" fill="#3c8c48">Y</text>
        <text x="308" y="643" fill="#b04048">X</text>
        <text x="275" y="643" fill="#222">Z</text>
    </Scene>
)

/* ---------- data ---------- */

const MENUS = ['File', 'Edit', 'View', 'Insert', 'Tools', 'Simulation', 'Window', 'Help']
const TABS = [['Assembly', 45], ['Layout', 38], ['Sketch', 42], ['Evaluate', 35], ['SOLIDWORKS Add-Ins', 89], ['Flow Simulation', 67], ['Simulation', 50]]
const NODES = [['3', '4.308e-001'], ['4', '4.441e-001'], ['42', '4.451e-001'], ['696', '4.421e-001'], ['697', '4.346e-001']]
const SUMMARY = [['Sum', '2.1967'], ['Avg', '0.43934'], ['Max', '0.4451'], ['Min', '0.4308'], ['RMS', '0.43938']]
const SCALE = ['5.077e+000', '4.654e+000', '4.231e+000', '3.808e+000', '3.385e+000', '2.962e+000', '2.539e+000', '2.115e+000', '1.692e+000', '1.269e+000', '8.462e-001', '4.231e-001', '8.745e-007']
const QUICK = [[PageIcon, 1], [OpenIcon, 1], [SaveIcon, 1], [PrintIcon, 2], [UndoIcon, 1], [CursorIcon, 1], [TrafficIcon, 0], [HandListIcon, 0], [OptionsIcon, 2]]
const VIEWS = [[Zoom], [() => <Zoom dashed />], [PrevView], [SectionView], [OrientView, 1], [CubeView, 1], [GlassesView, 1], [SphereView], [SceneView, 1], [MonitorView, 1], [NormalTo]]

const BigButton = ({ icon, lines, w, low, drop }) => (
    <RibbonButton $w={w} $low={low}>
        <RibbonIcon>{icon}</RibbonIcon>
        {lines.map(l => <span key={l}>{l}</span>)}
        {drop && <RibbonDrop><Caret /></RibbonDrop>}
    </RibbonButton>
)

const Group = ({ title, children, pad, tight }) => (
    <Section $tight={tight}>
        <SectionHead>{title}<Chevrons /></SectionHead>
        <SectionBody $pad={pad}>{children}</SectionBody>
    </Section>
)

const MouseWrap = styled.span`
position: absolute;
left: 71px;
top: 112px;
pointer-events: none;
`

const ProbePanel = () => {
    const [mode, setMode] = useState('From sensors')
    return (
        <Panel>
            <PanelTabs>
                <PanelTab aria-label="FeatureManager"><FmIcon /></PanelTab>
                <PanelTab $active aria-label="PropertyManager"><HandListIcon soft={false} /></PanelTab>
                <PanelTab aria-label="ConfigurationManager"><ConfigIcon /></PanelTab>
                <PanelTab aria-label="DisplayManager"><BallIcon /></PanelTab>
            </PanelTabs>
            <PanelTitle><h2>Probe Result</h2><span>?</span></PanelTitle>
            <PanelActions>
                <IconButton $w={13} aria-label="OK"><CheckIcon /></IconButton>
                <IconButton aria-label="Cancel"><CrossIcon /></IconButton>
                <IconButton $w={16} aria-label="Keep visible"><PushPin /></IconButton>
            </PanelActions>

            <Group title="Options" pad="1px 0 0" tight>
                {['At location', 'From sensors', 'On selected entities'].map(o => (
                    <Choice key={o}>
                        <Radio type="radio" name="mode" checked={mode === o} onChange={() => setMode(o)} />
                        {o}
                    </Choice>
                ))}
            </Group>

            <Group title="Results" pad="3px 2px 0 0" tight>
                <SelectWrap>
                    <Select aria-label="Sensor"><option>Workflow Sensitive2</option></Select>
                    <Caret color="#111" />
                </SelectWrap>
                <Well $h={108}>
                    <Grid $w={195}>
                        <colgroup>
                            <col width="27" /><col width="43" /><col width="24" /><col width="24" /><col width="25" /><col width="52" />
                        </colgroup>
                        <thead>
                            <tr>{['Node', 'Value (ksi)', 'X (in)', 'Y (in)', 'Z (in)', 'Components'].map(h => <th key={h}>{h}</th>)}</tr>
                        </thead>
                        <tbody>
                            {NODES.map(([n, v]) => (
                                <tr key={n}>
                                    <td className="num">{n}</td><td className="num">{v}</td><td>00000</td><td>99996</td><td>00000</td><td>arm-1</td>
                                </tr>
                            ))}
                        </tbody>
                    </Grid>
                </Well>
                <Choice $h={18}><Tick type="checkbox" />Save annotations for plot. (Attach sensor)</Choice>
            </Group>

            <Group title="Summary" pad="2px 2px 1px 0">
                <Well $h={76}>
                    <Grid $w={129}>
                        <colgroup><col width="43" /><col width="43" /><col width="43" /></colgroup>
                        <thead><tr><th /><th>Value</th><th /></tr></thead>
                        <tbody>
                            {SUMMARY.map(([k, v]) => <tr key={k}><th>{k}</th><td>{v}</td><td>ksi</td></tr>)}
                        </tbody>
                    </Grid>
                </Well>
            </Group>

            <Group title="Report Options">
                <ReportRow>
                    <ReportButton aria-label="Save sensor"><FloppyOver><path d="M1 13l5-7M5 1l5 2-4 5z" stroke="#222" fill="#444" /></FloppyOver></ReportButton>
                    <ReportButton aria-label="Save file"><FloppyOver><path d="M1 1h9v9H1zM1 4h9M4 1v9" stroke="#99a" fill="#eef" /></FloppyOver></ReportButton>
                    <ReportButton aria-label="Plot"><Svg s={14}><path d="M2 1v11h11" stroke="#55688c" /><path d="M3 10l3-6 3 4 3-5" stroke="#3a5aa8" /></Svg></ReportButton>
                    <ReportButton disabled aria-label="Response"><Svg s={14}><path d="M2 1v12h11V4L11 1H7v7M2 10h5M7 1H2M9 5h3" stroke="#b9b9bf" /></Svg></ReportButton>
                </ReportRow>
            </Group>

            <Group title="Annotations">
                {['Show Node/Element Number', 'Show X,Y,Z Location', 'Show Value'].map(o => (
                    <Choice key={o} $h={15}><Tick type="checkbox" defaultChecked />{o}</Choice>
                ))}
            </Group>
        </Panel>
    )
}

const Graphics = () => (
    <Viewport>
        <StressPlot />
        <PanelHandle aria-label="Collapse panel"><i /><i /><i /></PanelHandle>
        <FeatureTree>
            <Svg s={6}><path d="M.5.5h5v5h-5zM1.500 3h3M3 1.500v3" stroke="#88888d" /></Svg>
            <FmIcon />
            <span>pliers  (Default&lt;Copy of &lt;D...</span>
        </FeatureTree>
        <HeadsUp>
            {VIEWS.map(([Icon, drop], i) => (
                <React.Fragment key={i}>
                    <IconButton $w={21} aria-label={`View tool ${i + 1}`}><Icon /></IconButton>
                    {drop && <IconButton $w={9} aria-label="More"><Caret /></IconButton>}
                </React.Fragment>
            ))}
        </HeadsUp>
        <ModelInfo>
            <p>Model name:pliers</p>
            <p>Study name:Static 1(-Default-)</p>
            <p>Plot type: Static nodal stress Stress1</p>
        </ModelInfo>
        <DocButtons>
            {[TileIcon, TileIcon, MinIcon, RestoreIcon, CloseIcon].map((Icon, i) => (
                <button key={i} aria-label={`Document button ${i + 1}`}><Svg s={12}><Icon /></Svg></button>
            ))}
        </DocButtons>
        <Confirm $right={49} $top={26} aria-label="Accept"><CheckIcon color="#dbe8db" s={18} /></Confirm>
        <Confirm $right={28} $top={47} aria-label="Reject"><CrossIcon color="#e4d0d4" s={18} /></Confirm>
        <Legend>
            von Mises (ksi)
            <LegendScale>
                <LegendBar />
                <Ticks />
                <ol>{SCALE.map(v => <li key={v}>{v}</li>)}</ol>
            </LegendScale>
        </Legend>
        <TaskPane>
            {TASKS.map((t, i) => <TaskTab key={i} $active={i === 0} aria-label={`Task pane ${i + 1}`}>{t}</TaskTab>)}
        </TaskPane>
        <ViewName>*Isometric</ViewName>
    </Viewport>
)

const App = () => (
    <Window>
        <GlobalStyle />
        <TitleBar>
            <Brand><DsLogo /><span><b>SOLID</b>WORKS</span></Brand>
            <MenuBar>
                {MENUS.map(m => <MenuItem key={m} href="#">{m}</MenuItem>)}
                <Pin />
            </MenuBar>
            <QuickBar>
                {QUICK.map(([Icon, drop], i) => (
                    <React.Fragment key={i}>
                        <IconButton aria-label={`Quick tool ${i + 1}`}><Icon /></IconButton>
                        {drop > 0 && <IconButton $w={10} aria-label="More"><Caret color={drop === 2 ? '#222' : '#88888d'} /></IconButton>}
                    </React.Fragment>
                ))}
            </QuickBar>
            <DocTitle>pliers.SLDASM *</DocTitle>
            <SearchBox>
                <Svg s={11}><path d="M0 0h11v11H0z" fill="#2b2c33" /><path d="M2 3l3 2.500L2 8M6 8h3" stroke="#fff" /></Svg>
                <SearchInput aria-label="Search commands" defaultValue="fit" />
                <Svg s={12}><circle cx="7.500" cy="4.500" r="3.500" stroke="#77789a" fill="#f8f8fc" /><path d="M5 7l-4 4" stroke="#77789a" strokeWidth="1.500" /></Svg>
                <Caret color="#222" />
            </SearchBox>
            <WindowButtons>
                <IconButton aria-label="Help"><HelpIcon /></IconButton>
                <IconButton $w={6} aria-label="Help menu"><Caret color="#222" /></IconButton>
                <IconButton $w={16} aria-label="Minimize"><MinIcon /></IconButton>
                <IconButton $w={16} aria-label="Restore"><RestoreIcon /></IconButton>
                <IconButton $w={15} aria-label="Close"><CloseIcon /></IconButton>
            </WindowButtons>
        </TitleBar>

        <Ribbon>
            <RibbonGroup>
                <BigButton w={33} icon={<StudyIcon />} lines={['Study', 'Advisor']} drop />
            </RibbonGroup>
            <RibbonGroup>
                <BigButton w={34} icon={<MaterialIcon />} lines={['Apply', 'Material']} low />
                <BigButton w={34} icon={<FixtureIcon />} lines={['Fixtures', 'Advisor']} drop />
                <BigButton w={34} icon={<LoadsIcon />} lines={['External', 'Loads', 'Advisor']} drop />
                <BigButton w={50} icon={<ConnectIcon />} lines={['Connections', 'Advisor']} drop />
                <BigButton w={36} icon={<ShellIcon />} lines={['Shell', 'Manager']} low />
                <BigButton w={36} icon={<RunIcon />} lines={['Run This', 'Study']} drop />
            </RibbonGroup>
            <RibbonGroup>
                <BigButton w={34} icon={<PartShape />} lines={['Results', 'Advisor']} drop />
                <BigButton w={38} icon={<DeformedIcon />} lines={['Deformed', 'Result']} low />
                <BigButton w={38} icon={<CompareIcon />} lines={['Compare', 'Results']} low />
                <RibbonStack $w={86}>
                    <RibbonRow><InsightIcon /><span>Design Insight</span></RibbonRow>
                    <RibbonRow><PlotIcon /><span>Plot Tools</span><Caret /></RibbonRow>
                </RibbonStack>
            </RibbonGroup>
            <RibbonGroup $last>
                <RibbonStack $w={120}>
                    <RibbonRow><ReportIcon /><span>Report</span></RibbonRow>
                    <RibbonRow><ReportIcon /><span>Include Image for Report</span></RibbonRow>
                </RibbonStack>
            </RibbonGroup>
        </Ribbon>

        <WorkArea>
            <SideColumn>
                <TabStrip>
                    {TABS.map(([t, w]) => <Tab key={t} $w={w} $active={w === 50}>{t}</Tab>)}
                </TabStrip>
                <ProbePanel />
                <MouseWrap><CursorIcon fill="#fff" stroke="#333" /></MouseWrap>
            </SideColumn>
            <Graphics />
        </WorkArea>

        <SheetTabs>
            <SheetNav><button>|◂</button><button>◂</button><button>▸</button><button>▸|</button></SheetNav>
            <SheetTab $w={36}>Model</SheetTab>
            <SheetTab $w={45}>3D Views</SheetTab>
            <SheetTab $w={67}>Motion Study 1</SheetTab>
            <SheetTab $w={50} $active><Svg s={9}><path d="M1 1v6M3 3v5M5 5l3-3M4 7h5" stroke="#a03838" /><path d="M5 4l3 4" stroke="#c9a020" /></Svg>Static 1</SheetTab>
            <SheetTab $w={79}><Svg s={9}><path d="M1 1h4v3H1zM3 4v4h3M6 3h3M6 6h2" stroke="#2b3c70" /></Svg>Design Study 1</SheetTab>
        </SheetTabs>
        <FilterBar>
            <Grip />
            <IconButton $w={22} aria-label="Toggle filter"><Funnel fill="#d5d5d8" stroke="#a5a5aa" /></IconButton>
            <IconButton $w={22} aria-label="Clear filters"><Funnel n={3} fill="#d0d0d3" stroke="#a5a5aa" /></IconButton>
            <IconButton $w={22} aria-label="All filters"><Funnel n={3} fill="#5c9ddc" stroke="#1f4a80" /></IconButton>
            <IconButton $w={22} aria-label="Select"><CursorIcon /></IconButton>
            <IconButton $w={6} aria-label="More"><Caret /></IconButton>
            <IconButton $w={24} aria-label="Select other"><SelectOtherIcon /></IconButton>
            <Divider />
            <FilterGrid>
                {FILTERS.map((f, i) => <button key={i} aria-label={`Filter ${i + 1}`}><FilterIcon>{f}</FilterIcon></button>)}
            </FilterGrid>
            <Divider />
        </FilterBar>
        <StatusBar>
            <span>SOLIDWORKS Premium 2015 x64 Edition</span>
            <Spacer />
            <StatusCell $w={103}>Under Defined</StatusCell>
            <StatusCell $w={30} $dim>IPS</StatusCell>
            <StatusCell $w={15}>-</StatusCell>
            <Svg s={9}><path d="M1 1h7v7H1z" fill="#e8f2e4" stroke="#3a7a3a" /><path d="M3 3.500c0-2 3-2 3 0L4.500 5v2" stroke="#2a6a3a" /></Svg>
            <StatusCell $w={38} />
            <Svg s={10}><path d="M1 5l4-4h4v4L5 9z" fill="#f0c83c" stroke="#8a6a14" /></Svg>
        </StatusBar>
    </Window>
)

export default App
